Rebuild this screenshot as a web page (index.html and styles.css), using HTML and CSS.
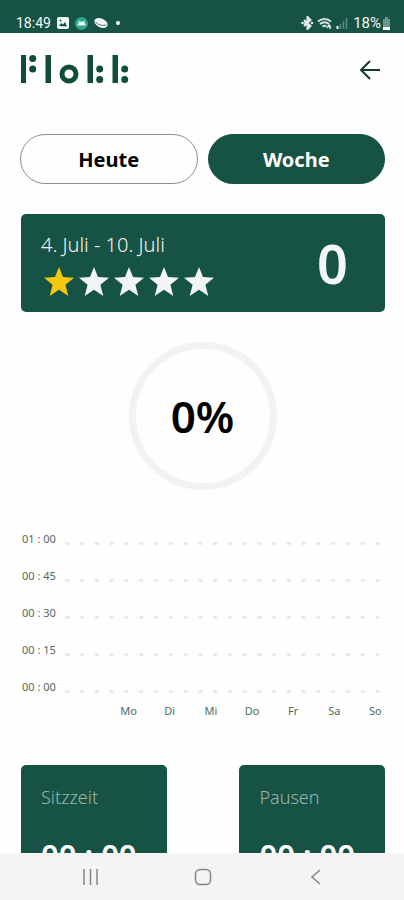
FILE: index.html
```html
<!DOCTYPE html>
<html lang="de">
<head>
<meta charset="utf-8">
<meta name="viewport" content="width=device-width, initial-scale=1">
<title>Flokk</title>
<link rel="stylesheet" href="styles.css">
</head>
<body>
<div class="statusbar">
  <div class="status-group">
    <span class="clock">18:49</span>
    <svg class="status-image" width="12" height="12" viewBox="0 0 12 12"><rect width="12" height="12" rx="2" fill="#f4f8f6"/><path d="M2 9l2-3 2 1.500 2-2.500 2 4.500z" fill="#174f42"/><circle cx="3.500" cy="3.500" r="1" fill="#174f42"/></svg>
    <svg width="13" height="13" viewBox="0 0 13 13"><circle cx="6.500" cy="6.500" r="6.500" fill="#2fa58c"/><path d="M2.500 8.500a4 4 0 0 1 8 0z" fill="#e8fffa"/><path d="M3.500 3.500l1.200 2M9.500 3.500l-1.200 2" stroke="#e8fffa"/></svg>
    <svg width="14" height="12" viewBox="0 0 14 12"><ellipse cx="7" cy="6" rx="7" ry="4.500" transform="rotate(25 7 6)" fill="#f4f8f6"/><path d="M1 4.500C4 8 8 9 12.500 8" fill="none" stroke="#174f42" stroke-width=".8"/></svg>
    <span class="status-dot"></span>
  </div>
  <div class="status-group status-right">
    <svg width="13" height="14" viewBox="0 0 13 14"><path d="M3 4l6.500 6L6.500 13V1l3 3L3 10" fill="#a9c2bb" stroke="#e4edea" stroke-width="2"/><circle cx="1.500" cy="7" r="1.300" fill="#e4edea"/><circle cx="11" cy="7" r="1.300" fill="#e4edea"/></svg>
    <svg width="16" height="13" viewBox="0 0 16 13"><path d="M1 4.500a10 10 0 0 1 13 0M3 7a7 7 0 0 1 9 0M5.500 9.500a3.500 3.500 0 0 1 4 0" fill="none" stroke="#d3e0dc" stroke-width="2"/><path d="M10 11l2-3 2 3M13 8v4" fill="none" stroke="#e4edea" stroke-width="1.300"/></svg>
    <svg width="12" height="12" viewBox="0 0 12 12"><path d="M1.500 9v3" stroke="#f4f8f6" stroke-width="2"/><path d="M4.500 7v5M7.500 4v8M10.500 1v11" stroke="#5e8b80" stroke-width="1.500"/></svg>
    <span class="battery-text">18%</span>
    <svg width="9" height="13" viewBox="0 0 9 13"><path d="M1 2h2V0h3v2h2v8H1z" fill="#6d9489"/><path d="M1 10h7v3H1z" fill="#fff"/></svg>
  </div>
</div>

<main class="screen">
  <header class="header">
    <svg class="logo" role="img" aria-label="Flokk" width="110" height="30" viewBox="0 0 110 30" fill="#104b3c">
      <rect x="1" y="1" width="5" height="28"/><circle cx="12.700" cy="4.500" r="3.500"/><circle cx="12.700" cy="15" r="3.500"/>
      <rect x="25.500" y="1" width="5.500" height="28"/>
      <circle cx="49" cy="20" r="7" fill="none" stroke="#104b3c" stroke-width="5"/>
      <rect x="67.500" y="1" width="5.500" height="28"/><circle cx="79.700" cy="15" r="3.500"/><circle cx="79.700" cy="25.500" r="3.500"/>
      <rect x="92.500" y="1" width="5.500" height="28"/><circle cx="104.700" cy="15" r="3.500"/><circle cx="104.700" cy="25.500" r="3.500"/>
    </svg>
    <button class="back" aria-label="Zurück"><svg width="22" height="20" viewBox="0 0 22 20"><path d="M21 10H2M11 1L2 10l9 9" fill="none" stroke="#12382f" stroke-width="2"/></svg></button>
  </header>

  <div class="tabs">
    <button class="tab">Heute</button>
    <button class="tab tab-active">Woche</button>
  </div>

  <section class="summary">
    <div class="summary-info">
      <p class="summary-date">4. Juli - 10. Juli</p>
      <div class="stars" role="img" aria-label="1 von 5 Sternen">
        <svg class="star star-on" viewBox="0 0 30 29"><path d="M15 0l4 10 11 .8-8.600 7L24.300 29 15 22.800 5.700 29l2.900-11.200L0 10.800 11 10z"/></svg>
        <svg class="star" viewBox="0 0 30 29"><path d="M15 0l4 10 11 .8-8.600 7L24.300 29 15 22.800 5.700 29l2.900-11.200L0 10.800 11 10z"/></svg>
        <svg class="star" viewBox="0 0 30 29"><path d="M15 0l4 10 11 .8-8.600 7L24.300 29 15 22.800 5.700 29l2.900-11.200L0 10.800 11 10z"/></svg>
        <svg class="star" viewBox="0 0 30 29"><path d="M15 0l4 10 11 .8-8.600 7L24.300 29 15 22.800 5.700 29l2.900-11.200L0 10.800 11 10z"/></svg>
        <svg class="star" viewBox="0 0 30 29"><path d="M15 0l4 10 11 .8-8.600 7L24.300 29 15 22.800 5.700 29l2.900-11.200L0 10.800 11 10z"/></svg>
      </div>
    </div>
    <span class="summary-score">0</span>
  </section>

  <div class="ring">0%</div>

  <section class="chart">
    <div class="chart-row"><span class="chart-label">01 : 00</span><span class="chart-line"></span></div>
    <div class="chart-row"><span class="chart-label">00 : 45</span><span class="chart-line"></span></div>
    <div class="chart-row"><span class="chart-label">00 : 30</span><span class="chart-line"></span></div>
    <div class="chart-row"><span class="chart-label">00 : 15</span><span class="chart-line"></span></div>
    <div class="chart-row"><span class="chart-label">00 : 00</span><span class="chart-line"></span></div>
    <div class="chart-days"><span>Mo</span><span>Di</span><span>Mi</span><span>Do</span><span>Fr</span><span>Sa</span><span>So</span></div>
  </section>

  <div class="cards">
    <section class="card"><h2 class="card-title">Sitzzeit</h2><p class="card-time">00 : 00</p></section>
    <section class="card"><h2 class="card-title">Pausen</h2><p class="card-time">00 : 00</p></section>
  </div>
</main>

<nav class="navbar">
  <button class="nav-button" aria-label="Letzte Apps"><svg width="18" height="18" viewBox="0 0 18 18"><path d="M2 1v16M8.500 1v16M15 1v16" stroke="#858585" stroke-width="1.500"/></svg></button>
  <button class="nav-button" aria-label="Startseite"><svg width="18" height="18" viewBox="0 0 18 18"><rect x="1.500" y="1.500" width="15" height="15" rx="4.500" fill="none" stroke="#858585" stroke-width="1.500"/></svg></button>
  <button class="nav-button" aria-label="Zurück"><svg width="18" height="18" viewBox="0 0 18 18"><path d="M13 2L5 9l8 7" fill="none" stroke="#858585" stroke-width="1.500"/></svg></button>
</nav>
</body>
</html>
```
FILE: styles.css
```css
* {
  box-sizing: border-box;
}

body {
  margin: 0;
  height: 100vh;
  display: flex;
  flex-direction: column;
  background: #fefefe;
  color: #000;
  font-family: "Noto Sans", "Open Sans", sans-serif;
}

button {
  margin: 0;
  padding: 0;
  border: 0;
  background: none;
  font: inherit;
  color: inherit;
}

svg {
  display: block;
}

h2,
p {
  margin: 0;
  font-weight: 400;
}

.statusbar {
  flex: none;
  display: flex;
  justify-content: space-between;
  padding: 13px 13px 0 16px;
  height: 33px;
  background: #175344;
  color: #f4f8f6;
  font: 400 15px/20px Roboto, sans-serif;
}

.clock {
  font-size: 14px;
}

.status-group {
  display: flex;
  align-items: center;
  height: 20px;
  gap: 5px;
}

.status-group:first-child {
  gap: 6px;
}

.status-right {
  gap: 3px;
}

.battery-text {
  margin-left: 2px;
  margin-right: -2px;
}

.status-dot {
  width: 4px;
  height: 4px;
  margin-left: 2px;
  border-radius: 50%;
  background: #fff;
}

.screen {
  flex: 1;
  min-height: 0;
  overflow: hidden;
  padding: 21px 19px 0 20px;
}

.header {
  display: flex;
  justify-content: space-between;
  padding-right: 4px;
}

.back {
  display: flex;
  align-items: center;
  height: 32px;
}

.tabs {
  display: flex;
  gap: 10px;
  margin-top: 48px;
}

.tab {
  flex: 1;
  height: 50px;
  padding-top: 1px;
  border: 1px solid #87938f;
  border-radius: 25px;
  font-size: 20px;
  font-weight: 700;
}

.tab-active {
  border-color: #175344;
  background: #175344;
  color: #fff;
}

.summary {
  display: flex;
  justify-content: space-between;
  align-items: center;
  height: 98px;
  margin: 30px 0 0 1px;
  padding: 0 37px 0 20px;
  border-radius: 5px;
  background: #175344;
  color: #f2f6f4;
}

.summary-date {
  padding-top: 3px;
  font-size: 20px;
  font-weight: 300;
  line-height: 24px;
}

.stars {
  display: flex;
  gap: 5px;
  margin-top: 10px;
  padding-left: 3px;
}

.star {
  width: 30px;
  height: 29px;
  fill: #f1f5f4;
}

.star-on {
  fill: #f5c710;
}

.summary-score {
  font-size: 54px;
  font-weight: 600;
  line-height: 96px;
}

.ring {
  display: flex;
  align-items: center;
  justify-content: center;
  width: 148px;
  height: 148px;
  margin: 30px auto 0;
  border: 7px solid #f2f2f2;
  border-radius: 50%;
  font-size: 44px;
  font-weight: 600;
  line-height: 60px;
}

.chart {
  margin-top: 39px;
  color: #53695f;
  font-size: 11px;
  line-height: 20px;
}

.chart-row {
  display: flex;
  align-items: center;
  height: 37px;
}

.chart-row:first-child {
  height: 20px;
}

.chart-row:not(:first-child) {
  align-items: flex-end;
}

.chart-label {
  flex: none;
  width: 40px;
  padding-left: 2px;
}

.chart-line {
  flex: 1;
  align-self: flex-end;
  height: 3px;
  margin-bottom: 4px;
  background: radial-gradient(ellipse 3px 2px, #e4e4e4 40%, transparent) 0 0 / calc(100% / 22) 100%;
}

.chart-days {
  display: grid;
  grid-template-columns: repeat(7, 1fr);
  margin: 4px -11px 0 88px;
  text-align: center;
}

.cards {
  display: flex;
  justify-content: space-between;
  margin: 44px 0 0 1px;
}

.card {
  width: 40%;
  height: 140px;
  padding: 20px;
  border-radius: 5px;
  background: #175344;
  color: #fff;
}

.card-title {
  color: #9bb5ae;
  font-size: 18px;
  font-weight: 300;
  line-height: 24px;
}

.card-time {
  margin-top: 26px;
  font-size: 31px;
  font-weight: 600;
  line-height: 40px;
  white-space: nowrap;
}

.navbar {
  flex: none;
  display: flex;
  justify-content: center;
  height: 47px;
  padding-left: 3px;
  background: #f4f4f4;
}

.nav-button {
  display: flex;
  align-items: center;
  justify-content: center;
  width: 28%;
}
```
